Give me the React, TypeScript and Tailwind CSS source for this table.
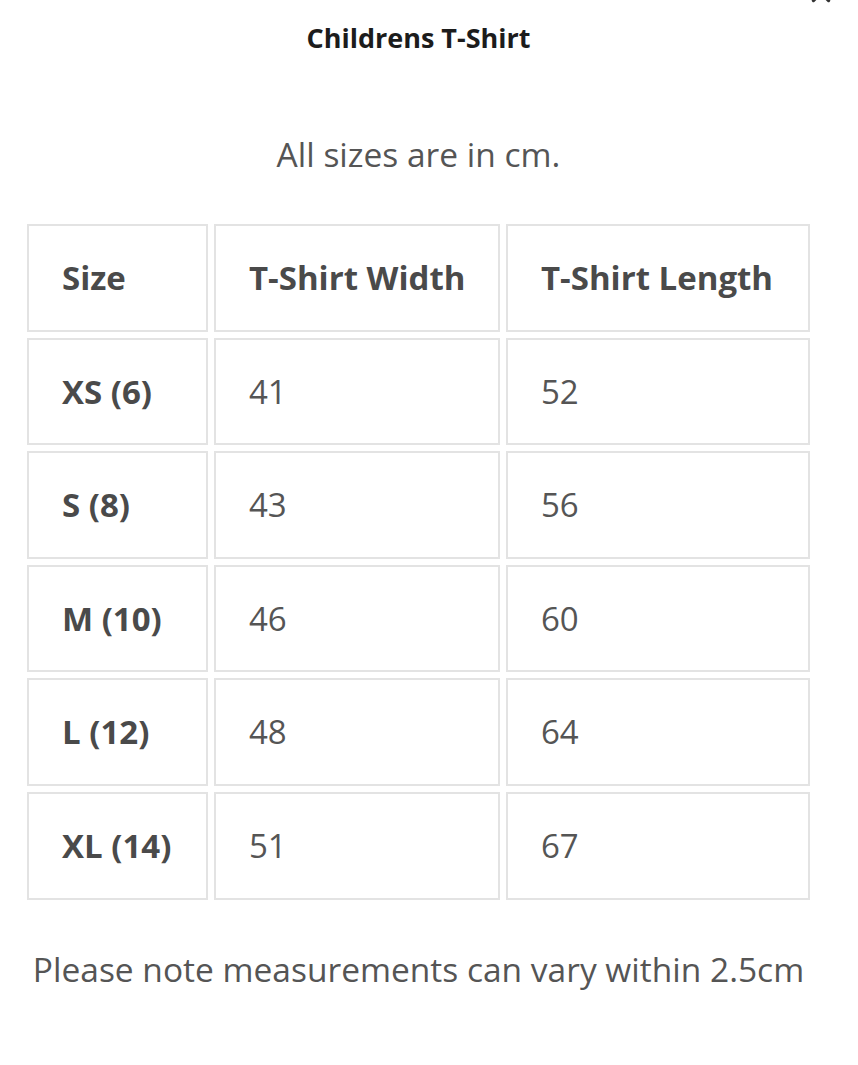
import React from 'react'

type Row = { size: string; width: number; length: number }

const rows: Row[] = [
  { size: 'XS (6)', width: 41, length: 52 },
  { size: 'S (8)', width: 43, length: 56 },
  { size: 'M (10)', width: 46, length: 60 },
  { size: 'L (12)', width: 48, length: 64 },
  { size: 'XL (14)', width: 51, length: 67 },
]

const cell = 'h-[107.6px] border-2 border-[#e3e3e3] pl-[33px] pr-0 align-middle text-left whitespace-nowrap'

function App() {
  return (
    <div className="relative min-h-[1065px] w-[858px] overflow-hidden bg-white font-['Open_Sans',sans-serif]">
      {/* close button, mostly scrolled off the top */}
      <button className="absolute right-[24px] top-[-20px] text-[#333]" aria-label="Close">
        <svg width="26" height="26" viewBox="0 0 24 24" fill="none" stroke="currentColor" strokeWidth="3" strokeLinecap="round">
          <path d="M5 5l14 14M19 5L5 19" />
        </svg>
      </button>

      <div className="w-[837px]">
        <h2 className="pt-[20px] text-center text-[27px] font-bold leading-[36px] text-[#1c1c1c]">
          Childrens T-Shirt
        </h2>

        <p className="mt-[76px] text-center text-[33.5px] leading-[44px] text-[#555]">All sizes are in cm.</p>

        <div className="mt-[42px] px-[21px]">
          <table className="w-[795px] table-fixed border-separate border-spacing-x-[6px] border-spacing-y-[6.6px]">
            <colgroup>
              <col className="w-[181px]" />
              <col className="w-[286px]" />
              <col className="w-[304px]" />
            </colgroup>
            <thead>
              <tr className="text-[33px] font-bold text-[#4a4a4a]">
                <th className={cell}>Size</th>
                <th className={cell}>T-Shirt Width</th>
                <th className={cell}>T-Shirt Length</th>
              </tr>
            </thead>
            <tbody>
              {rows.map((row) => (
                <tr key={row.size} className="text-[33px] text-[#555]">
                  <td className={`${cell} font-bold text-[#4a4a4a]`}>{row.size}</td>
                  <td className={cell}>{row.width}</td>
                  <td className={cell}>{row.length}</td>
                </tr>
              ))}
            </tbody>
          </table>
        </div>

        <p className="mt-[41px] text-center text-[33.5px] leading-[44px] text-[#555]">
          Please note measurements can vary within 2.5cm
        </p>
      </div>
    </div>
  )
}

export default App
